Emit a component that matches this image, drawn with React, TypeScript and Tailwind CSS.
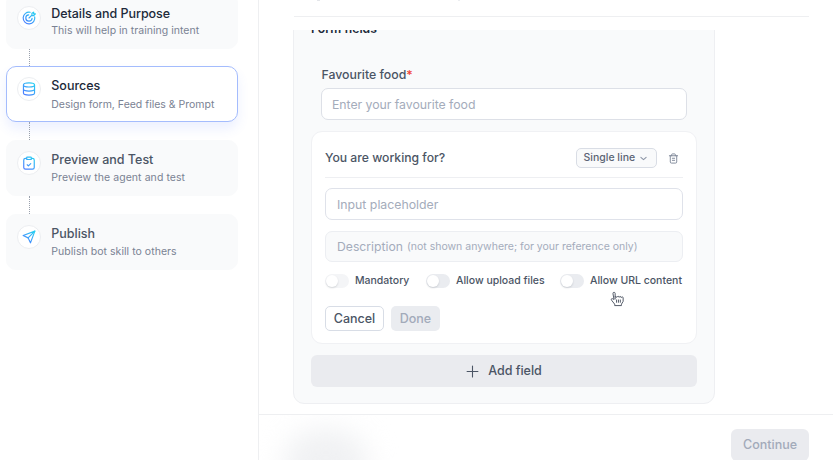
import type { ReactNode } from "react";

const iconProps = {
  viewBox: "0 0 24 24",
  fill: "none",
  strokeWidth: 2,
  strokeLinecap: "round" as const,
  strokeLinejoin: "round" as const,
};

function StepIcon({ children }: { children: ReactNode }) {
  return (
    <div className="flex size-6 shrink-0 items-center justify-center rounded-full border border-[#eceef1] bg-white">
      <svg {...iconProps} stroke="url(#step-gradient)" className="size-[14px]">
        <defs>
          <linearGradient id="step-gradient" gradientUnits="userSpaceOnUse" x1="20" y1="3" x2="6" y2="21">
            <stop offset="0" stopColor="#27cdf2" />
            <stop offset="1" stopColor="#4a80ff" />
          </linearGradient>
        </defs>
        {children}
      </svg>
    </div>
  );
}

const steps = [
  {
    title: "Details and Purpose",
    text: "This will help in training intent",
    card: "border-[#f9fafb] bg-[#f9fafb] pt-[12px]",
    titleClass: "text-[#202939] tracking-[-0.05px]",
    textClass: "mt-[1px] tracking-[0.02px]",
    icon: (
      <>
        <path d="M21.800 10A10 10 0 1 1 14 2.200" />
        <path d="M17.300 12.500A5.400 5.400 0 1 1 11.500 6.700" />
        <path d="M12 12l5-5M17 7V4l3-2v3h3l-3 3h-3" />
      </>
    ),
  },
  {
    title: "Sources",
    text: "Design form, Feed files & Prompt",
    card: "border-[#a4bcfd] bg-white pt-[10px] shadow-[0_7px_12px_rgba(68,105,255,0.10)]",
    titleClass: "text-[#202939] mt-px",
    textClass: "mt-[2.500px]",
    icon: (
      <>
        <ellipse cx="12" cy="5" rx="9.500" ry="3.500" />
        <path d="M2.500 5v14c0 1.900 4 3.500 9.500 3.500s9.500-1.600 9.500-3.500V5" />
        <path d="M2.500 12c0 1.900 4 3.500 9.500 3.500s9.500-1.600 9.500-3.500" />
      </>
    ),
  },
  {
    title: "Preview and Test",
    text: "Preview the agent and test",
    card: "border-[#f9fafb] bg-[#f9fafb] pt-[10px]",
    titleClass: "text-[#4b5565] mt-px",
    textClass: "mt-[2px] tracking-[0.07px]",
    icon: (
      <>
        <path d="M8 4H6a3 3 0 0 0-3 3v12.500a3 3 0 0 0 3 3h12a3 3 0 0 0 3-3V7a3 3 0 0 0-3-3h-2" />
        <rect x="8" y="2" width="8" height="4" rx="1" />
        <path d="m9 15 2 2 4-4" />
      </>
    ),
  },
  {
    title: "Publish",
    text: "Publish bot skill to others",
    card: "border-[#f9fafb] bg-[#f9fafb] pt-[10px]",
    titleClass: "text-[#4b5565] mt-px",
    textClass: "mt-[2px] tracking-[0.04px]",
    icon: (
      <>
        <path d="M22 2 2 9.500l8.500 4L14.500 22z" />
        <path d="M22 2 10.500 13.500" />
      </>
    ),
  },
];

function Sidebar() {
  return (
    <aside className="-mt-[7.500px] h-[468px] w-[259px] shrink-0 border-r border-[#eeeff1] pl-[6px]">
      {steps.map((step, i) => (
        <div key={step.title}>
          {i > 0 && <div className="ml-[22.500px] h-[17.700px] w-px border-l border-dotted border-[#9aa1ad]" />}
          <div className={`flex h-[56px] w-[231.500px] rounded-[10px] border pl-[9.500px] ${step.card}`}>
            <StepIcon>{step.icon}</StepIcon>
            <div className="ml-[10.800px] whitespace-nowrap">
              <div className={`text-[12.500px] font-medium leading-4 ${step.titleClass}`}>{step.title}</div>
              <div className={`text-[10.500px] leading-4 text-[#7a8293] ${step.textClass}`}>{step.text}</div>
            </div>
          </div>
        </div>
      ))}
    </aside>
  );
}

function Toggle({ label, className, track }: { label: string; className: string; track: string }) {
  return (
    <div className={`flex shrink-0 items-center ${className}`}>
      <span className={`flex h-[14px] w-[24px] items-center rounded-full px-px ${track}`}>
        <span className="size-[12px] rounded-full bg-white shadow-[0_1px_2px_rgba(16,24,40,0.15)]" />
      </span>
      <span className="ml-[6px] whitespace-nowrap text-[10.500px] font-medium leading-4 text-[#4b5565]">{label}</span>
    </div>
  );
}

function FieldEditor() {
  return (
    <section className="mt-[11px] h-[213px] rounded-[11px] border border-[#f0f1f4] bg-white px-[13px]">
      <div className="flex h-[46px] items-center border-b border-[#eeeff2] pt-[7px]">
        <span className="text-[12.200px] font-medium text-[#4b5565]">You are working for?</span>
        <div className="ml-auto flex h-5 w-[81px] items-center justify-between rounded-[5px] border border-[#d9dde5] bg-[#f9fafb] pl-[7px] pr-[8px]">
          <span className="text-[10.500px] font-medium text-[#5b6474]">Single line</span>
          <svg {...iconProps} stroke="#8b94a5" strokeWidth={2.800} className="size-[9px]">
            <path d="m5 9 7 6 7-6" />
          </svg>
        </div>
        <svg {...iconProps} stroke="#7b8496" className="ml-[11px] mr-[4.500px] size-[11px]">
          <path d="M3 6h18M8 6V3.500A1.500 1.500 0 0 1 9.500 2h5A1.500 1.500 0 0 1 16 3.500V6M5 6v13.500A2.500 2.500 0 0 0 7.500 22h9a2.500 2.500 0 0 0 2.500-2.500V6M9.500 11.500h5M9.500 16h5" />
        </svg>
      </div>
      <div className="mt-[10px] flex h-8 items-center rounded-[7px] border border-[#dfe2ea] px-[11px] pt-[2px] text-[12.300px] text-[#a4acbb]">
        Input placeholder
      </div>
      <div className="mt-[11px] flex h-[31px] items-center whitespace-nowrap rounded-[7px] border border-[#eceef2] bg-[#f9fafb] px-[11px] pt-px text-[12.200px] text-[#a4acbb]">
        Description<span className="ml-[4px] text-[10.500px]">(not shown anywhere; for your reference only)</span>
      </div>
      <div className="mt-[11px] flex h-4">
        <Toggle label="Mandatory" className="w-[101px]" track="bg-[#f4f5f7]" />
        <Toggle label="Allow upload files" className="w-[134px]" track="bg-[#eaecf0]" />
        <Toggle label="Allow URL content" className="" track="bg-[#eaecf0]" />
      </div>
      <div className="mt-[17px] flex gap-[7px] text-[12.500px] font-medium">
        <button className="h-[25px] w-[59px] rounded-[5px] border border-[#d8dde6] pt-px text-[#4b5565]">Cancel</button>
        <button className="h-[25px] w-[49px] rounded-[5px] bg-[#eaecf0] pt-px text-[#a2aaba]">Done</button>
      </div>
    </section>
  );
}

function Cursor() {
  return (
    <svg viewBox="0 0 15 17" fill="white" stroke="#4b5260" strokeLinejoin="round" strokeLinecap="round" className="absolute left-[610px] top-[291px] h-[16px] w-[15px]">
      <path d="M5 8.500V2.500C4.700.700 2.500 1 2.700 2.900L3.800 9 2.300 8.200C1 7.700.500 8.800 1.200 9.800L4.500 14v1.500h7.200V14l1.800-3V7.200c0-1.200-1.700-1.300-2-.2 0-1.500-2-1.500-2.200-.3 0-1.300-2-1.400-2.300-.1L5 6" />
      <path d="M6.500 9.500v2.500M8.500 9.500v2.500M10.500 9.500v2.500" />
    </svg>
  );
}

export default function App() {
  return (
    <div className="relative flex h-[460px] w-[833px] overflow-hidden bg-white font-['Inter',sans-serif]">
      <Sidebar />
      <main className="flex min-w-0 flex-1 flex-col">
        <header className="ml-[35px] flex h-[17px] w-[515px] border-b border-[#eeeff1]">
          <span className="ml-[23px] h-px w-[3px] bg-[#e4e6ea]" />
          <span className="ml-[138px] h-px w-[2px] bg-[#eceef1]" />
        </header>
        <div className="mt-[13px] h-[384px] overflow-hidden pl-[34px]">
          <div className="-mt-[15px] h-[389px] w-[422px] rounded-[11px] border border-[#eeeff2] bg-[#f9fafb] px-[17px]">
            <h2 className="mt-[5px] text-[12.200px] font-semibold leading-4 text-[#202939]">Form fields</h2>
            <div className="mt-[30px] px-[10px]">
              <div className="pl-[0.500px] text-[12.300px] font-medium leading-4 text-[#4b5565]">
                Favourite food<span className="text-[#f04438]">*</span>
              </div>
              <div className="mt-[5px] flex h-8 items-center rounded-[7px] border border-[#dde0e7] bg-white px-[10px] pt-[2px] text-[12.300px] tracking-[-0.04px] text-[#a4acbb]">
                Enter your favourite food
              </div>
            </div>
            <FieldEditor />
            <button className="mt-[11px] flex h-8 w-full items-center justify-center gap-[9px] rounded-[6px] bg-[#eaebef] pt-px text-[12.500px] font-medium text-[#4b5565]">
              <svg {...iconProps} stroke="#4b5565" className="size-[13px]">
                <path d="M2 12h20M12 2v20" />
              </svg>
              Add field
            </button>
          </div>
        </div>
        <footer className="relative flex flex-1 overflow-hidden border-t border-[#eeeff1]">
          <div className="absolute left-[25px] top-[14px] h-[70px] w-[84px] rounded-full bg-[#f0f1f3] blur-[14px]" />
          <button className="ml-auto mr-[24px] mt-[14px] h-8 w-[78px] rounded-[6px] bg-[#eaebef] text-[12.500px] font-medium text-[#a2aaba]">
            Continue
          </button>
        </footer>
      </main>
      <Cursor />
    </div>
  );
}
